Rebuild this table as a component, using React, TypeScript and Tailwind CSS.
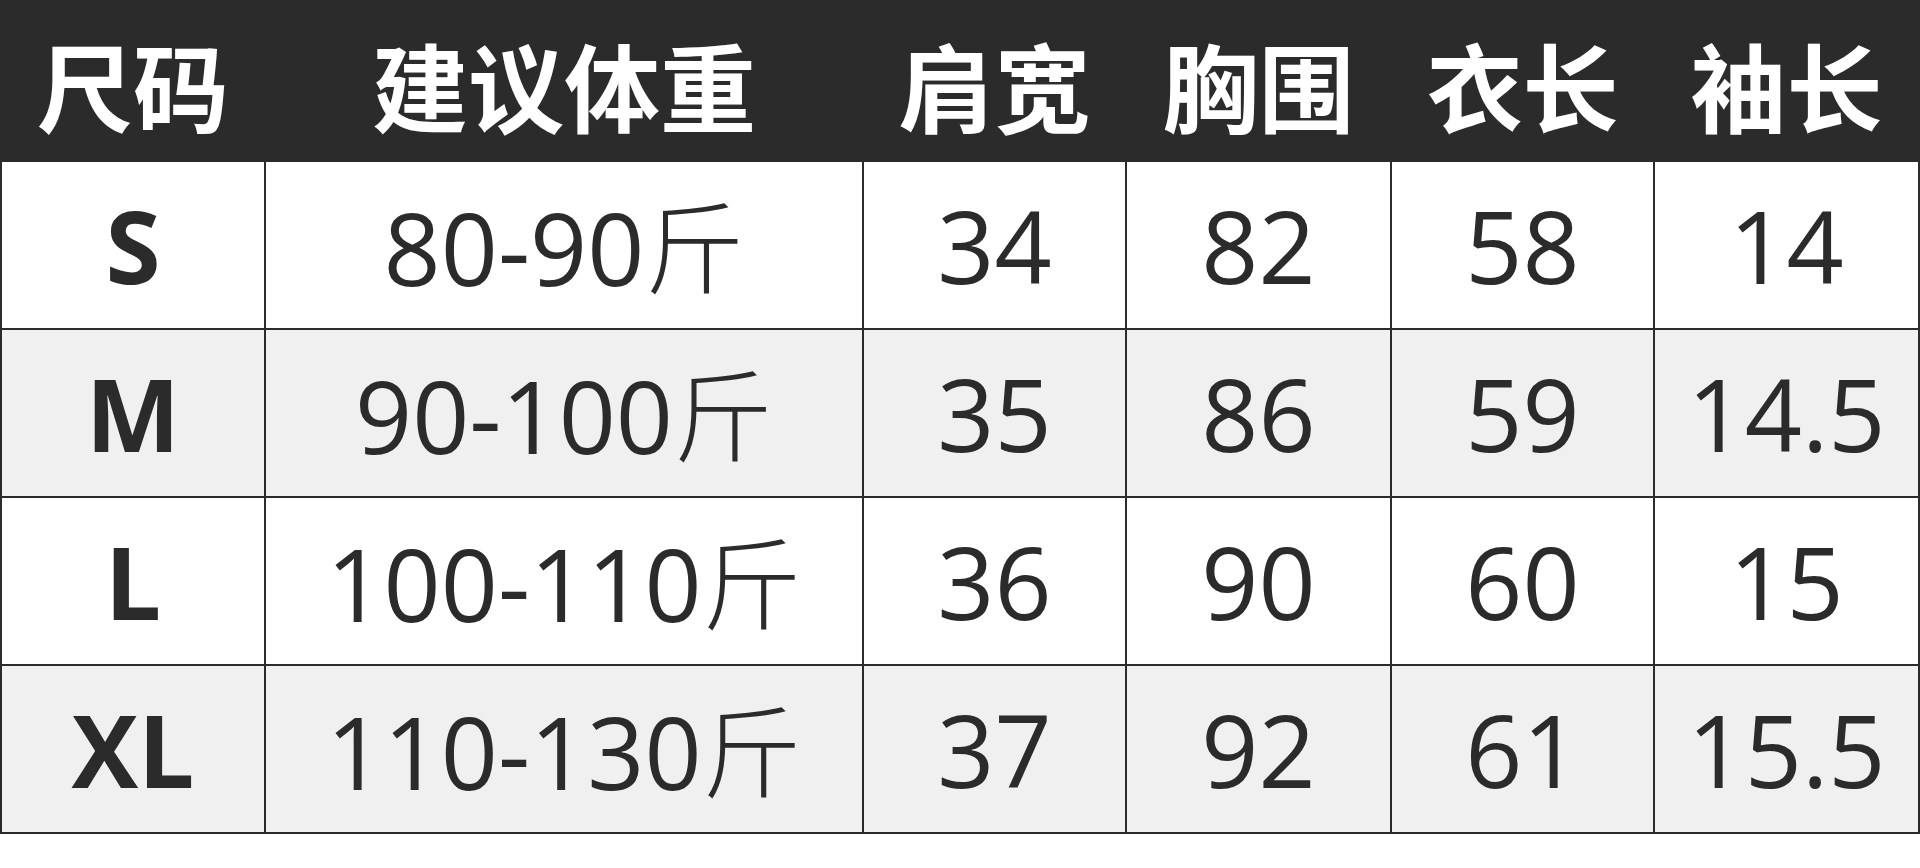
const headers = ['尺码', '建议体重', '肩宽', '胸围', '衣长', '袖长'];

const rows = [
  { size: 'S', weight: '80-90', shoulder: '34', chest: '82', length: '58', sleeve: '14' },
  { size: 'M', weight: '90-100', shoulder: '35', chest: '86', length: '59', sleeve: '14.5' },
  { size: 'L', weight: '100-110', shoulder: '36', chest: '90', length: '60', sleeve: '15' },
  { size: 'XL', weight: '110-130', shoulder: '37', chest: '92', length: '61', sleeve: '15.5' },
];

const num = "font-['Open_Sans','Noto_Sans_CJK_SC',sans-serif] text-[100px] leading-none text-[#2b2b2b]";

export default function App() {
  return (
    <div className="w-[1920px] h-[868px] bg-white overflow-hidden">
      <div className="w-[1920px] bg-[#2b2b2b] grid grid-cols-[262px_596px_261px_263px_261px_263px] gap-[2px] px-[2px] pb-[2px]">
        {headers.map((h) => (
          <div
            key={h}
            className="h-[160px] flex items-center justify-center pt-[8px] text-white font-bold text-[96px] leading-none font-['Noto_Sans_CJK_SC',sans-serif]"
          >
            {h}
          </div>
        ))}
        {rows.map((r, i) => {
          const bg = i % 2 === 1 ? 'bg-[#f0f0f0]' : 'bg-white';
          return (
            <div key={r.size} className="contents">
              <div className={`${bg} h-[166px] flex items-center justify-center`}>
                <span className="font-['Open_Sans',sans-serif] font-bold text-[100px] leading-none text-[#2b2b2b]">
                  {r.size}
                </span>
              </div>
              <div className={`${bg} h-[166px] flex items-center justify-center`}>
                <span className={num}>
                  {r.weight}
                  <span className="font-['Noto_Sans_CJK_SC',sans-serif] font-light">斤</span>
                </span>
              </div>
              {[r.shoulder, r.chest, r.length, r.sleeve].map((v, j) => (
                <div key={j} className={`${bg} h-[166px] flex items-center justify-center`}>
                  <span className={num}>{v}</span>
                </div>
              ))}
            </div>
          );
        })}
      </div>
    </div>
  );
}
